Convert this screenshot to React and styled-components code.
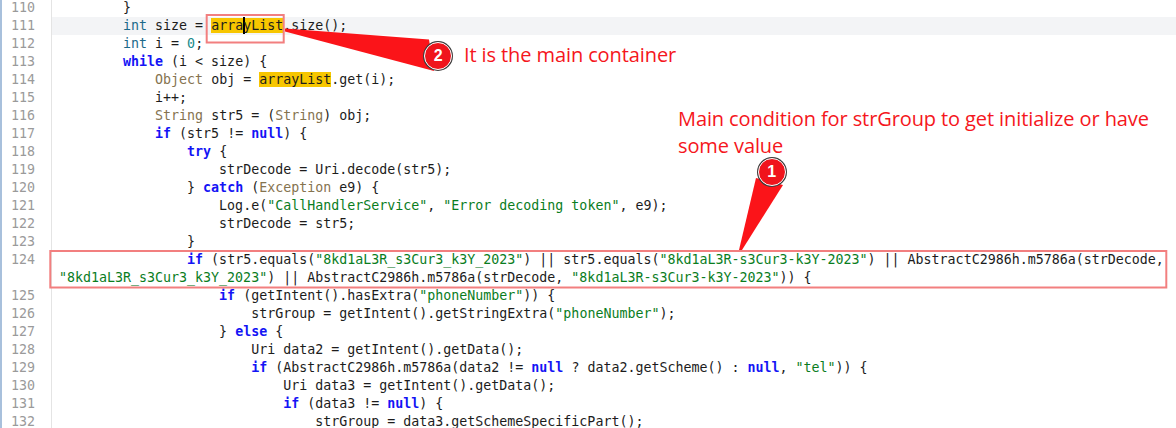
import React from 'react';
import styled, { createGlobalStyle } from 'styled-components';

const Global = createGlobalStyle`
  html, body { margin: 0; padding: 0; background: #ffffff; }
  body { width: 1176px; height: 428px; overflow: hidden; }
`;

const Page = styled.div`
  position: relative;
  width: 1176px;
  height: 428px;
  overflow: hidden;
  background: #ffffff;
`;

const Editor = styled.div`
  display: flex;
  flex-direction: column;
  margin-top: -1px;
  border-left: 2px solid #a8c0dc;
  font-family: "DejaVu Sans Mono", "Liberation Mono", monospace;
  font-size: 13.3px;
  line-height: 18px;
  color: #1c1c1c;
`;

const Line = styled.div`
  display: grid;
  grid-template-columns: 50px 1fr;
`;

const Num = styled.div`
  box-sizing: border-box;
  text-align: right;
  padding-right: 16px;
  color: #9a9a9a;
  border-right: 1px solid #e4e4e4;
`;

const Code = styled.div`
  padding-left: 7px;
  white-space: pre;
  background: ${(p) => (p.$current ? '#f3f4f6' : 'transparent')};
`;

const Row = styled.span`
  display: block;
`;

const Kw = styled.span`
  color: #1414f5;
  font-weight: bold;
`;
const Prim = styled.span`
  color: #1b6a8a;
`;
const Cls = styled.span`
  color: #85734f;
`;
const Str = styled.span`
  color: #0a7d1e;
`;
const NumLit = styled.span`
  color: #1a8a8a;
`;
const Hl = styled.span`
  background: #f7c600;
`;
const Cursor = styled.span`
  display: inline-block;
  width: 0;
  height: 17px;
  vertical-align: top;
  border-left: 2px solid #000;
  margin-right: -2px;
`;

const Overlay = styled.svg`
  position: absolute;
  left: 0;
  top: 0;
  pointer-events: none;
`;

const Badge = styled.div`
  position: absolute;
  left: ${(p) => p.$x - 14}px;
  top: ${(p) => p.$y - 14}px;
  width: 28px;
  height: 28px;
  box-sizing: border-box;
  border-radius: 50%;
  background: #f0141c;
  border: 1.5px solid #ffffff;
  box-shadow: 0 0 0 1px #3c3c3c;
  display: flex;
  align-items: center;
  justify-content: center;
  color: #ffffff;
  font-family: "Liberation Sans", Arial, sans-serif;
  font-weight: bold;
  font-size: 16px;
`;

const Note = styled.div`
  position: absolute;
  left: ${(p) => p.$x}px;
  top: ${(p) => p.$y}px;
  width: ${(p) => p.$w}px;
  color: #f51620;
  font-family: "Open Sans", "Noto Sans", sans-serif;
  font-size: 20px;
  line-height: 27px;
  letter-spacing: -0.1px;
`;

const I = (n) => '    '.repeat(n);

const lines = [
  [110, <>{I(2)}{'}'}</>],
  [111, <>{I(2)}<Prim>int</Prim> size = <Hl>arra<Cursor />yList</Hl>.size();</>, true],
  [112, <>{I(2)}<Prim>int</Prim> i = <NumLit>0</NumLit>;</>],
  [113, <>{I(2)}<Kw>while</Kw> (i &lt; size) {'{'}</>],
  [114, <>{I(3)}<Cls>Object</Cls> obj = <Hl>arrayList</Hl>.get(i);</>],
  [115, <>{I(3)}i++;</>],
  [116, <>{I(3)}<Cls>String</Cls> str5 = (<Cls>String</Cls>) obj;</>],
  [117, <>{I(3)}<Kw>if</Kw> (str5 != <Kw>null</Kw>) {'{'}</>],
  [118, <>{I(4)}<Kw>try</Kw> {'{'}</>],
  [119, <>{I(5)}strDecode = Uri.decode(str5);</>],
  [120, <>{I(4)}{'} '}<Kw>catch</Kw> (<Cls>Exception</Cls> e9) {'{'}</>],
  [121, <>{I(5)}Log.e(<Str>"CallHandlerService"</Str>, <Str>"Error decoding token"</Str>, e9);</>],
  [122, <>{I(5)}strDecode = str5;</>],
  [123, <>{I(4)}{'}'}</>],
  [124, <>
    <Row>{I(4)}<Kw>if</Kw> (str5.equals(<Str>"8kd1aL3R_s3Cur3_k3Y_2023"</Str>) || str5.equals(<Str>"8kd1aL3R-s3Cur3-k3Y-2023"</Str>) || AbstractC2986h.m5786a(strDecode,</Row>
    <Row><Str>"8kd1aL3R_s3Cur3_k3Y_2023"</Str>) || AbstractC2986h.m5786a(strDecode, <Str>"8kd1aL3R-s3Cur3-k3Y-2023"</Str>)) {'{'}</Row>
  </>],
  [125, <>{I(5)}<Kw>if</Kw> (getIntent().hasExtra(<Str>"phoneNumber"</Str>)) {'{'}</>],
  [126, <>{I(6)}strGroup = getIntent().getStringExtra(<Str>"phoneNumber"</Str>);</>],
  [127, <>{I(5)}{'} '}<Kw>else</Kw> {'{'}</>],
  [128, <>{I(6)}Uri data2 = getIntent().getData();</>],
  [129, <>{I(6)}<Kw>if</Kw> (AbstractC2986h.m5786a(data2 != <Kw>null</Kw> ? data2.getScheme() : <Kw>null</Kw>, <Str>"tel"</Str>)) {'{'}</>],
  [130, <>{I(7)}Uri data3 = getIntent().getData();</>],
  [131, <>{I(7)}<Kw>if</Kw> (data3 != <Kw>null</Kw>) {'{'}</>],
  [132, <>{I(8)}strGroup = data3.getSchemeSpecificPart();</>],
];

export default function App() {
  return (
    <Page>
      <Global />
      <Editor>
        {lines.map(([n, content, cur]) => (
          <Line key={n}>
            <Num>{n}</Num>
            <Code $current={cur}>{content}</Code>
          </Line>
        ))}
      </Editor>
      <Overlay width="1176" height="428" viewBox="0 0 1176 428">
        <rect x="206.7" y="15" width="77" height="27.5" fill="none" stroke="#f27f7f" strokeWidth="2" />
        <rect x="50.3" y="251" width="1116" height="36.5" fill="none" stroke="#f27f7f" strokeWidth="2" />
        <polygon points="285,28.5 285,31.5 434,71 429,39.5" fill="#fb1419" />
        <polygon points="739,250 742,250 783,185 756,178" fill="#fb1419" />
      </Overlay>
      <Badge $x={438.3} $y={55.7}>2</Badge>
      <Badge $x={771.7} $y={171.7}>1</Badge>
      <Note $x={464} $y={41} $w={400}>It is the main container</Note>
      <Note $x={678} $y={105} $w={488}>Main condition for strGroup to get initialize or have some value</Note>
    </Page>
  );
}
